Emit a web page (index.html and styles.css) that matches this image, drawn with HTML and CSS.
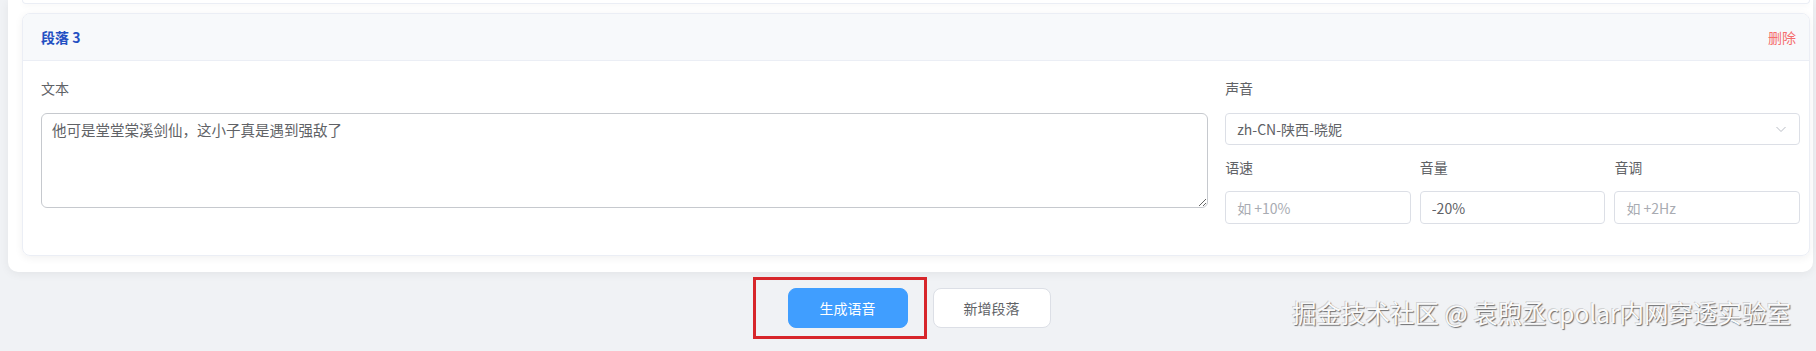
FILE: index.html
```html
<!DOCTYPE html>
<html lang="zh-CN">
<head>
  <meta charset="UTF-8">
  <meta name="viewport" content="width=device-width, initial-scale=1.0">
  <title>语音生成</title>
  <link rel="stylesheet" href="styles.css">
</head>
<body>

  <div class="page">
    <div class="panel">
      <!-- tail of the previous paragraph card -->
      <div class="prev-card"></div>

      <div class="para-card">
        <div class="para-head">
          <span class="para-title">段落 3</span>
          <a class="para-delete">删除</a>
        </div>

        <div class="para-body">
          <div class="col-text">
            <div class="field-label">文本</div>
            <textarea class="text-input">他可是堂堂棠溪剑仙，这小子真是遇到强敌了</textarea>
          </div>

          <div class="col-voice">
            <div class="field-label">声音</div>
            <div class="select-box">
              <span>zh-CN-陕西-晓妮</span>
              <svg class="chevron" width="12" height="12" viewBox="0 0 12 12">
                <path d="M1.5 4 L6 8.5 L10.5 4" fill="none" stroke="#b8bcc4" stroke-width="1"/>
              </svg>
            </div>

            <div class="params">
              <div class="param">
                <div class="field-label">语速</div>
                <input class="small-input" type="text" placeholder="如 +10%">
              </div>
              <div class="param">
                <div class="field-label">音量</div>
                <input class="small-input" type="text" value="-20%">
              </div>
              <div class="param">
                <div class="field-label">音调</div>
                <input class="small-input" type="text" placeholder="如 +2Hz">
              </div>
            </div>
          </div>
        </div>
      </div>
    </div>

    <div class="actions">
      <span class="highlight">
        <button class="btn btn-primary">生成语音</button>
      </span>
      <button class="btn">新增段落</button>
    </div>
  </div>

  <div class="watermark">掘金技术社区 @ 袁煦丞cpolar内网穿透实验室</div>

</body>
</html>
```

FILE: styles.css
```css
body {
  margin: 0;
  height: 351px;
  overflow: hidden;
  background-color: #f0f2f5;
  font-family: "Noto Sans CJK SC", "Liberation Sans", sans-serif;
  color: #606266;
  position: relative;
}

.page {
  padding: 0 3px 0 8px;
}

.panel {
  background-color: #fff;
  border-radius: 0 0 10px 10px;
  box-shadow: 0 2px 10px rgba(0, 0, 0, 0.06);
  padding: 0 3px 16px 14px;
}

.prev-card {
  height: 3px;
  margin-bottom: 9px;
  border: 1px solid #ebeef5;
  border-top: none;
  border-radius: 0 0 8px 8px;
  box-shadow: 0 2px 6px rgba(0, 0, 0, 0.04);
}

.para-card {
  border: 1px solid #ebeef5;
  border-radius: 8px;
  box-shadow: 0 2px 8px rgba(0, 0, 0, 0.06);
  overflow: hidden;
}

.para-head {
  height: 46px;
  display: flex;
  justify-content: space-between;
  align-items: center;
  padding: 0 13px 0 18px;
  background-color: #f7f9fb;
  border-bottom: 1px solid #ebeef5;
}

.para-title {
  font-size: 14px;
  font-weight: bold;
  color: #2350c2;
}

.para-delete {
  font-size: 14px;
  color: #f56c6c;
  cursor: pointer;
}

.para-body {
  display: grid;
  grid-template-columns: 67fr 33fr;
  column-gap: 17px;
  padding: 16px 9px 31px 18px;
}

.field-label {
  height: 22px;
  line-height: 22px;
  font-size: 14px;
  color: #606266;
  margin-bottom: 14px;
}

.text-input {
  display: block;
  box-sizing: border-box;
  width: 100%;
  height: 95px;
  padding: 5px 10px;
  border: 1px solid #c6c9ce;
  border-radius: 6px;
  font-family: inherit;
  font-size: 14.5px;
  line-height: 22px;
  color: #606266;
  resize: vertical;
  outline: none;
}

.select-box {
  height: 32px;
  box-sizing: border-box;
  display: flex;
  align-items: center;
  justify-content: space-between;
  padding: 0 12px 0 11px;
  border: 1px solid #dcdfe6;
  border-radius: 4px;
  font-size: 14px;
  color: #606266;
}

.params {
  display: grid;
  grid-template-columns: repeat(3, 1fr);
  column-gap: 9px;
  margin-top: 11px;
}

.params .field-label {
  margin-bottom: 13px;
}

.small-input {
  display: block;
  box-sizing: border-box;
  width: 100%;
  height: 33px;
  padding: 0 11px;
  border: 1px solid #dcdfe6;
  border-radius: 4px;
  font-family: inherit;
  font-size: 14px;
  color: #606266;
  outline: none;
}

.small-input::placeholder {
  color: #a8abb2;
}

/* bottom buttons */
.actions {
  display: flex;
  justify-content: center;
  gap: 25px;
  margin-top: 16px;
  padding-left: 17px;
}

.btn {
  height: 40px;
  width: 118px;
  border: 1px solid #dcdfe6;
  border-radius: 8px;
  background-color: #fff;
  font-family: inherit;
  font-size: 14px;
  color: #606266;
}

.btn-primary {
  width: 120px;
  border-color: #409eff;
  background-color: #409eff;
  color: #fff;
}

.highlight {
  position: relative;
  display: inline-block;
}

/* red annotation frame round the primary button */
.highlight::after {
  content: "";
  position: absolute;
  left: -35px;
  top: -11px;
  width: 168px;
  height: 56px;
  border: 3px solid #d7262b;
  pointer-events: none;
}

.watermark {
  position: absolute;
  right: 25px;
  top: 298px;
  font-size: 24.5px;
  line-height: 30px;
  color: #fafafa;
  text-shadow: 1px 1px 1px rgba(0, 0, 0, 0.55), -1px -1px 0 rgba(0, 0, 0, 0.15);
}
```
